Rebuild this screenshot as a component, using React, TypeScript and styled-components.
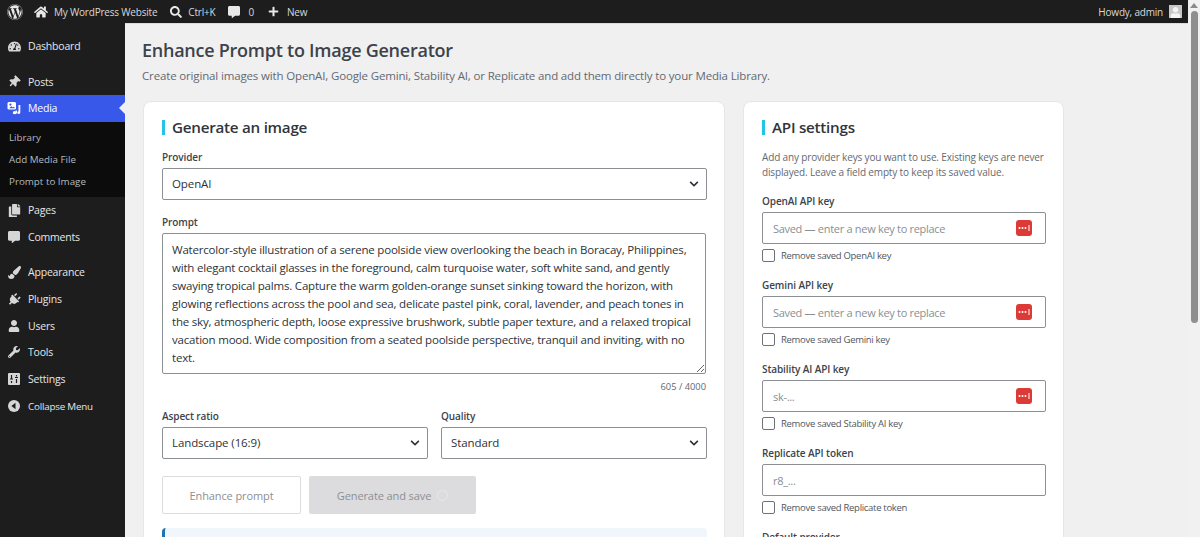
import React from "react";
import styled, { createGlobalStyle } from "styled-components";
import {
  FaWordpress,
  FaHome,
  FaSearch,
  FaCommentAlt,
  FaPlus,
  FaTachometerAlt,
  FaThumbtack,
  FaCopy,
  FaPaintBrush,
  FaPlug,
  FaUser,
  FaWrench,
  FaChevronDown,
} from "react-icons/fa";

const FONT = `"Open Sans", "Noto Sans", sans-serif`;

const GlobalStyle = createGlobalStyle`
  html, body {
    margin: 0;
    padding: 0;
    height: 537px;
    overflow: hidden;
    background: #f0f0f0;
    font-family: ${FONT};
  }
  * { box-sizing: border-box; }
`;

const Screen = styled.div`
  display: flex;
  width: 1200px;
  height: 537px;
  overflow: hidden;
`;

const Page = styled.div`
  flex: 1;
  min-width: 0;
  display: flex;
  flex-direction: column;
`;

const AdminBar = styled.header`
  height: 23px;
  flex: none;
  background: #1d1d1d;
  color: #d6d9dc;
  display: flex;
  align-items: center;
  padding: 0 6px 0 7px;
  font-size: 10px;
  letter-spacing: -0.2px;
`;

const BarItem = styled.div<{ $gap?: number; $left?: number }>`
  display: flex;
  align-items: center;
  gap: ${(p) => p.$gap ?? 6}px;
  margin-left: ${(p) => p.$left ?? 0}px;
  white-space: nowrap;
  svg { color: #e8e8e8; flex: none; }
`;

const Avatar = styled.div`
  width: 13px;
  height: 13px;
  background: #c8c8c8;
  display: flex;
  align-items: flex-end;
  justify-content: center;
  overflow: hidden;
  svg { color: #f4f4f4; }
`;

const Spacer = styled.div`
  flex: 1;
`;

const Body = styled.div`
  flex: 1;
  min-height: 0;
  display: flex;
`;

const Sidebar = styled.nav`
  width: 125px;
  flex: none;
  background: #1d1d1d;
  padding-top: 10px;
`;

const MenuRow = styled.div<{ $active?: boolean; $gapAfter?: boolean }>`
  position: relative;
  height: 26.7px;
  margin-bottom: ${(p) => (p.$gapAfter ? 8.5 : 0)}px;
  display: flex;
  align-items: center;
  padding-left: 7px;
  gap: 7px;
  font-size: 10.5px;
  letter-spacing: -0.2px;
  color: ${(p) => (p.$active ? "#ffffff" : "#e4e6e8")};
  background: ${(p) => (p.$active ? "#3858e9" : "transparent")};
`;

const MenuIcon = styled.span<{ $active?: boolean; $tilt?: boolean }>`
  width: 14px;
  height: 14px;
  flex: none;
  display: flex;
  align-items: center;
  justify-content: center;
  color: ${(p) => (p.$active ? "#ffffff" : "#d4d6d8")};
  transform: ${(p) => (p.$tilt ? "rotate(45deg)" : "none")};
`;

const ActiveNotch = styled.span`
  position: absolute;
  right: 0;
  top: 50%;
  margin-top: -6px;
  border: 6px solid transparent;
  border-left-width: 0;
  border-right-color: #f0f0f0;
`;

const SubMenu = styled.div`
  background: #0c0c0c;
  padding: 5px 0 4px;
  margin-bottom: 0.5px;
`;

const SubItem = styled.div`
  height: 22px;
  display: flex;
  align-items: center;
  padding-left: 9px;
  font-size: 9.8px;
  color: #b4b9be;
`;

const CollapseLabel = styled.span`
  font-size: 9.8px;
  margin-top: 2px;
`;

const Content = styled.main`
  flex: 1;
  min-width: 0;
  overflow: hidden;
  padding: 14px 0 0 17px;
  border-top: 1px solid #dcdcdc;
`;

const PageTitle = styled.h1`
  margin: 0;
  font-size: 18px;
  line-height: 24px;
  font-weight: 600;
  letter-spacing: -0.25px;
  color: #3c434a;
`;

const PageIntro = styled.p`
  margin: 6px 0 0;
  font-size: 11.5px;
  line-height: 16px;
  letter-spacing: -0.15px;
  color: #646970;
`;

const Columns = styled.div`
  display: flex;
  align-items: flex-start;
  gap: 18px;
  margin: 17px 0 0 1px;
`;

const Card = styled.section<{ $width: number }>`
  width: ${(p) => p.$width}px;
  flex: none;
  background: #ffffff;
  border: 1px solid #e6e6e6;
  border-radius: 8px;
  padding: 16px 17px 60px 18px;
`;

const CardTitle = styled.h2`
  margin: 0;
  display: flex;
  align-items: center;
  gap: 7px;
  height: 18px;
  font-size: 15.2px;
  font-weight: 600;
  letter-spacing: -0.25px;
  color: #2f353a;
  &::before {
    content: "";
    width: 3px;
    height: 15px;
    background: #22c3e6;
  }
`;

const FieldLabel = styled.label`
  display: block;
  font-size: 10px;
  line-height: 14px;
  font-weight: 600;
  letter-spacing: -0.1px;
  color: #3c434a;
  margin-bottom: 4px;
`;

const SelectWrap = styled.div`
  position: relative;
  height: 32px;
  svg {
    position: absolute;
    right: 8px;
    top: 11px;
    color: #2c3338;
    pointer-events: none;
  }
`;

const NativeSelect = styled.select`
  appearance: none;
  width: 100%;
  height: 100%;
  border: 1px solid #8c8f94;
  border-radius: 2px;
  background: #ffffff;
  padding: 0 9px 1px;
  font-family: ${FONT};
  font-size: 11.5px;
  letter-spacing: -0.1px;
  color: #2c3338;
`;

const Group = styled.div<{ $top: number }>`
  margin-top: ${(p) => p.$top}px;
`;

const KeyGroup = styled.div`
  margin-top: 14px;
  padding-bottom: 2px;
`;

const PromptArea = styled.textarea`
  display: block;
  width: 544px;
  height: 141px;
  border: 1px solid #8c8f94;
  border-radius: 2px;
  padding: 6.5px 9px;
  font-family: ${FONT};
  font-size: 11.5px;
  line-height: 18px;
  letter-spacing: -0.2px;
  color: #2c3338;
  overflow: hidden;
  white-space: pre;
`;

const Counter = styled.div`
  text-align: right;
  font-size: 9.3px;
  line-height: 13px;
  margin: 6px 1px 0 0;
  color: #646970;
`;

const TwoCol = styled.div`
  display: grid;
  grid-template-columns: 266px 266px;
  column-gap: 13px;
  margin-top: 16px;
`;

const Actions = styled.div`
  display: flex;
  gap: 8px;
  margin-top: 17px;
`;

const GhostButton = styled.button`
  width: 139px;
  height: 38px;
  background: #ffffff;
  border: 1px solid #dcdcde;
  border-radius: 2px;
  font-family: ${FONT};
  font-size: 11px;
  letter-spacing: -0.1px;
  color: #8c8f94;
`;

const BusyButton = styled.button`
  width: 167px;
  height: 38px;
  background: #dcdcde;
  border: none;
  border-radius: 2px;
  font-family: ${FONT};
  font-size: 11px;
  letter-spacing: -0.1px;
  color: #8c8f94;
  display: flex;
  align-items: center;
  justify-content: center;
  gap: 6px;
`;

const Spinner = styled.span`
  width: 11px;
  height: 11px;
  border-radius: 50%;
  border: 1.5px solid #e8e8e8;
`;

const Notice = styled.div`
  margin-top: 14px;
  height: 40px;
  background: #f0f6fc;
  border-left: 3px solid #2271b1;
  border-radius: 4px;
`;

const Help = styled.p`
  margin: 14px 0 0;
  font-size: 10px;
  line-height: 15px;
  letter-spacing: -0.15px;
  color: #646970;
`;

const KeyInputWrap = styled.div`
  position: relative;
  height: 32px;
`;

const KeyInput = styled.input`
  width: 100%;
  height: 100%;
  border: 1px solid #8c8f94;
  border-radius: 2px;
  padding: 0 40px 0 10px;
  font-family: ${FONT};
  font-size: 11px;
  letter-spacing: -0.3px;
  color: #2c3338;
  &::placeholder { color: #8a8f94; opacity: 1; }
`;

const KeyBadge = styled.span`
  position: absolute;
  right: 14px;
  top: 8px;
  width: 16px;
  height: 16px;
  border-radius: 3px;
  background: #dc3a36;
  display: flex;
  align-items: center;
  justify-content: center;
`;

const CheckRow = styled.label`
  display: flex;
  align-items: center;
  gap: 6px;
  margin-top: 4px;
  height: 14px;
  font-size: 9.5px;
  letter-spacing: -0.3px;
  color: #50575e;
`;

const CheckBox = styled.input`
  appearance: none;
  width: 13px;
  height: 13px;
  margin: 0;
  border: 1px solid #6e7378;
  border-radius: 2px;
  background: #ffffff;
`;

const Scrollbar = styled.aside`
  width: 12px;
  flex: none;
  background: #f1f1f1;
  display: flex;
  flex-direction: column;
  align-items: center;
  padding-top: 3px;
`;

const ScrollArrow = styled.span`
  border: 4px solid transparent;
  border-top-width: 0;
  border-bottom: 5px solid #8a8a8a;
`;

const ScrollThumb = styled.span`
  width: 7px;
  height: 312px;
  margin-top: 3px;
  border-radius: 4px;
  background: #8f8f8f;
`;

const MediaIcon = () => (
  <svg width="14" height="14" viewBox="0 0 14 14" fill="currentColor">
    <path d="M1.5 1h6.5l1 1v5.5l-1 1H1.500l-1-1V2z" />
    <circle cx="3.400" cy="3.600" r="1.100" fill="#3858e9" />
    <path d="M2 7.300l2.400-2 1.500 1.300 1-.8.800.9v.6z" fill="#3858e9" />
    <path d="M7.500 13a1.600 1.400 0 1 1 1-2.500V9.500h1.500V11a1.800 1.800 0 0 1-2.500 2z" />
    <path d="M11.500 4h1.800v7.500a1.500 1.400 0 1 1-1.800-1.300z" />
  </svg>
);

const SettingsIcon = () => (
  <svg width="14" height="14" viewBox="0 0 14 14">
    <rect x="1" y="1" width="12" height="12" rx="1" fill="currentColor" />
    <path d="M4.500 3v3.500M3 7h3M4.500 9v2M9.500 3v1.500M8 5.500h3M9.500 7v4" stroke="#1d1d1d" strokeWidth="1.200" fill="none" />
  </svg>
);

const CollapseIcon = () => (
  <svg width="14" height="14" viewBox="0 0 14 14">
    <circle cx="7" cy="7" r="6" fill="currentColor" />
    <path d="M8.500 3.800v6.400L4.400 7z" fill="#1d1d1d" />
  </svg>
);

const PasswordDots = () => (
  <svg width="12" height="6" viewBox="0 0 12 6" fill="#ffffff">
    <circle cx="1.500" cy="3" r="1" />
    <circle cx="4.500" cy="3" r="1" />
    <circle cx="7.500" cy="3" r="1" />
    <rect x="10.500" y="0" width="1" height="6" />
  </svg>
);

const PROMPT = [
  "Watercolor-style illustration of a serene poolside view overlooking the beach in Boracay, Philippines,",
  "with elegant cocktail glasses in the foreground, calm turquoise water, soft white sand, and gently",
  "swaying tropical palms. Capture the warm golden-orange sunset sinking toward the horizon, with",
  "glowing reflections across the pool and sea, delicate pastel pink, coral, lavender, and peach tones in",
  "the sky, atmospheric depth, loose expressive brushwork, subtle paper texture, and a relaxed tropical",
  "vacation mood. Wide composition from a seated poolside perspective, tranquil and inviting, with no",
  "text.",
].join("\n");

const KEY_FIELDS = [
  { label: "OpenAI API key", placeholder: "Saved — enter a new key to replace", remove: "Remove saved OpenAI key", badge: true },
  { label: "Gemini API key", placeholder: "Saved — enter a new key to replace", remove: "Remove saved Gemini key", badge: true },
  { label: "Stability AI API key", placeholder: "sk-...", remove: "Remove saved Stability AI key", badge: true },
  { label: "Replicate API token", placeholder: "r8_...", remove: "Remove saved Replicate token", badge: false },
];

const Select: React.FC<{ value: string }> = ({ value }) => (
  <SelectWrap>
    <NativeSelect defaultValue={value}>
      <option>{value}</option>
    </NativeSelect>
    <FaChevronDown size={10} />
  </SelectWrap>
);

export default function App() {
  return (
    <Screen>
      <GlobalStyle />
      <Page>
        <AdminBar>
          <BarItem>
            <FaWordpress size={16} />
          </BarItem>
          <BarItem $left={11}>
            <FaHome size={14} />
            My WordPress Website
          </BarItem>
          <BarItem $left={13}>
            <FaSearch size={12} />
            Ctrl+K
          </BarItem>
          <BarItem $left={13} $gap={8}>
            <FaCommentAlt size={12} />
            0
          </BarItem>
          <BarItem $left={14} $gap={8}>
            <FaPlus size={11} />
            New
          </BarItem>
          <Spacer />
          <BarItem>
            Howdy, admin
            <Avatar>
              <FaUser size={11} />
            </Avatar>
          </BarItem>
        </AdminBar>
        <Body>
          <Sidebar>
            <MenuRow $gapAfter>
              <MenuIcon><FaTachometerAlt size={13} /></MenuIcon>
              Dashboard
            </MenuRow>
            <MenuRow>
              <MenuIcon $tilt><FaThumbtack size={12} /></MenuIcon>
              Posts
            </MenuRow>
            <MenuRow $active>
              <MenuIcon $active><MediaIcon /></MenuIcon>
              Media
              <ActiveNotch />
            </MenuRow>
            <SubMenu>
              <SubItem>Library</SubItem>
              <SubItem>Add Media File</SubItem>
              <SubItem>Prompt to Image</SubItem>
            </SubMenu>
            <MenuRow>
              <MenuIcon><FaCopy size={13} /></MenuIcon>
              Pages
            </MenuRow>
            <MenuRow $gapAfter>
              <MenuIcon><FaCommentAlt size={12} /></MenuIcon>
              Comments
            </MenuRow>
            <MenuRow>
              <MenuIcon><FaPaintBrush size={13} /></MenuIcon>
              Appearance
            </MenuRow>
            <MenuRow>
              <MenuIcon $tilt><FaPlug size={13} /></MenuIcon>
              Plugins
            </MenuRow>
            <MenuRow>
              <MenuIcon><FaUser size={12} /></MenuIcon>
              Users
            </MenuRow>
            <MenuRow>
              <MenuIcon><FaWrench size={12} /></MenuIcon>
              Tools
            </MenuRow>
            <MenuRow>
              <MenuIcon><SettingsIcon /></MenuIcon>
              Settings
            </MenuRow>
            <MenuRow>
              <MenuIcon><CollapseIcon /></MenuIcon>
              <CollapseLabel>Collapse Menu</CollapseLabel>
            </MenuRow>
          </Sidebar>
          <Content>
            <PageTitle>Enhance Prompt to Image Generator</PageTitle>
            <PageIntro>
              Create original images with OpenAI, Google Gemini, Stability AI, or Replicate and add them directly to your Media Library.
            </PageIntro>
            <Columns>
              <Card $width={582}>
                <CardTitle>Generate an image</CardTitle>
                <Group $top={14}>
                  <FieldLabel>Provider</FieldLabel>
                  <Select value="OpenAI" />
                </Group>
                <Group $top={15}>
                  <FieldLabel>Prompt</FieldLabel>
                  <PromptArea defaultValue={PROMPT} readOnly />
                  <Counter>605 / 4000</Counter>
                </Group>
                <TwoCol>
                  <div>
                    <FieldLabel>Aspect ratio</FieldLabel>
                    <Select value="Landscape (16:9)" />
                  </div>
                  <div>
                    <FieldLabel>Quality</FieldLabel>
                    <Select value="Standard" />
                  </div>
                </TwoCol>
                <Actions>
                  <GhostButton>Enhance prompt</GhostButton>
                  <BusyButton>
                    Generate and save
                    <Spinner />
                  </BusyButton>
                </Actions>
                <Notice />
              </Card>
              <Card $width={321}>
                <CardTitle>API settings</CardTitle>
                <Help>
                  Add any provider keys you want to use. Existing keys are never displayed. Leave a field empty to keep its saved value.
                </Help>
                {KEY_FIELDS.map((field) => (
                  <KeyGroup key={field.label}>
                    <FieldLabel>{field.label}</FieldLabel>
                    <KeyInputWrap>
                      <KeyInput placeholder={field.placeholder} />
                      {field.badge && (
                        <KeyBadge>
                          <PasswordDots />
                        </KeyBadge>
                      )}
                    </KeyInputWrap>
                    <CheckRow>
                      <CheckBox type="checkbox" />
                      {field.remove}
                    </CheckRow>
                  </KeyGroup>
                ))}
                <KeyGroup>
                  <FieldLabel>Default provider</FieldLabel>
                </KeyGroup>
              </Card>
            </Columns>
          </Content>
        </Body>
      </Page>
      <Scrollbar>
        <ScrollArrow />
        <ScrollThumb />
      </Scrollbar>
    </Screen>
  );
}
